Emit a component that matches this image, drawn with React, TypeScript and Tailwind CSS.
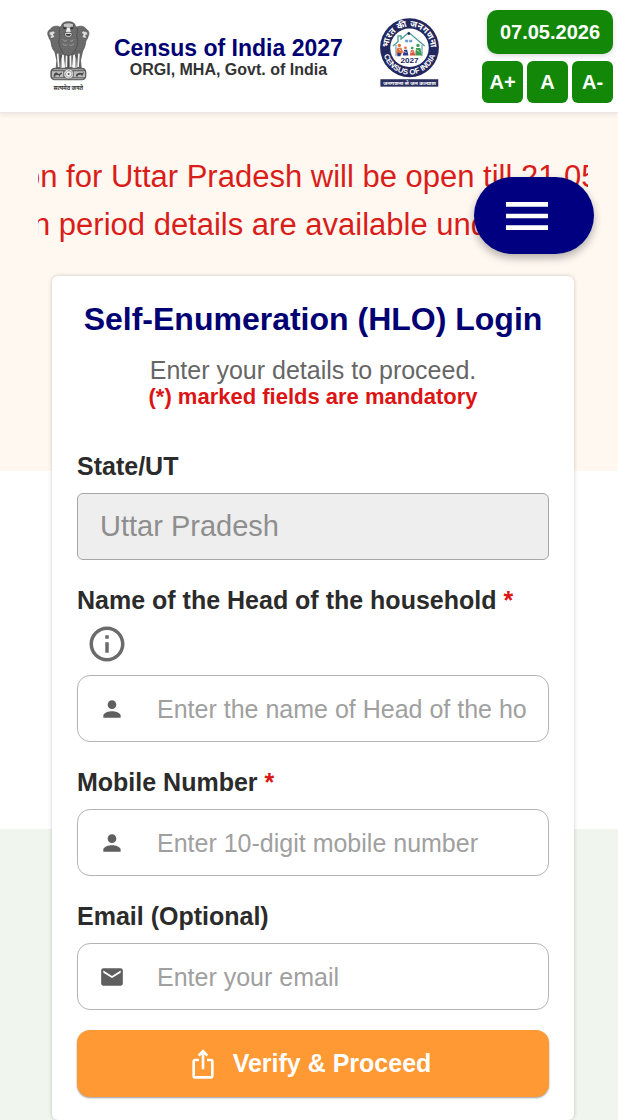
import type { ReactNode } from "react";
import { MdIosShare, MdMail, MdMenu, MdOutlineInfo, MdPerson } from "react-icons/md";

function StateEmblem() {
  return (
    <svg viewBox="51 48 129 213" className="h-[71px] w-[43px] shrink-0" role="img" aria-label="State Emblem of India">
      <defs>
        <pattern id="mane" width="6" height="6" patternUnits="userSpaceOnUse">
          <rect width="6" height="6" fill="#5c5c5c" />
          <path d="M0 1l3 3 3-3" stroke="#a8a8a8" strokeWidth="1.4" fill="none" />
        </pattern>
      </defs>
      {/* side lions */}
      <path d="M92 68c-10-8-26-5-31 5-8 4-10 14-5 22 1 7 6 9 7 16 2 18 8 28 18 34h16z" fill="url(#mane)" stroke="#4a4a4a" strokeWidth="2" />
      <path d="M138 68c10-8 26-5 31 5 8 4 10 14 5 22-1 7-6 9-7 16-2 18-8 28-18 34h-16z" fill="url(#mane)" stroke="#4a4a4a" strokeWidth="2" />
      <path d="M58 82l12-4 6 5-6 5 4 8-9 4-6-3 5-5-7-4z" fill="#ddd" stroke="#555" strokeWidth="1.5" />
      <path d="M172 82l-12-4-6 5 6 5-4 8 9 4 6-3-5-5 7-4z" fill="#ddd" stroke="#555" strokeWidth="1.5" />
      {/* legs */}
      <path d="M72 134l7 32-2 24h14l2-28 6-16 6 44h22l6-44 6 16 2 28h14l-2-24 7-32z" fill="#666" />
      <path d="M83 146l3 40M99 150l3 36M110 144l-1 42M121 144l1 42M132 150l-3 36M147 146l-3 40" stroke="#f2f2f2" strokeWidth="5" fill="none" />
      <path d="M115 138v50M93 150v38M138 150v38" stroke="#3e3e3e" strokeWidth="2.5" />
      {/* front lion */}
      <path d="M94 62c3-9 10-12 21-12s19 3 21 12c8 8 6 22 4 32 6 10 4 30-5 42-6 10-12 16-20 16s-15-6-20-16c-9-12-11-32-5-42-3-10-4-24 4-32z" fill="url(#mane)" stroke="#444" strokeWidth="2" />
      <path d="M99 58c8-6 24-6 32 0l-2 10c-3-2-7-2-9 1h-9c-3-3-7-3-10-1z" fill="#c4c4c4" stroke="#333" strokeWidth="2" />
      <path d="M100 69l8 1M122 70l8-1" stroke="#222" strokeWidth="3.5" />
      <path d="M111 68h8l3 12-3 4h-8l-3-4z" fill="#eee" />
      <path d="M104 84c5-3 17-3 22 0 2 8-3 13-11 13s-13-5-11-13z" fill="#d8d8d8" stroke="#333" strokeWidth="2" />
      <path d="M107 87h16l-3 5h-10z" fill="#333" />
      <path d="M98 103c5 6 8 6 12 4M132 103c-5 6-8 6-12 4M98 116c6 6 10 6 14 3M132 116c-6 6-10 6-14 3" stroke="#bbb" strokeWidth="2" fill="none" />
      {/* abacus with wheel */}
      <rect x="61" y="188" width="108" height="38" rx="13" fill="#5f5f5f" />
      <path d="M70 194h90M70 221h90" stroke="#d0d0d0" strokeWidth="2" />
      <path d="M66 199h34v18H66zM131 199h34v18h-34z" fill="#bdbdbd" />
      <circle cx="116" cy="207" r="15" fill="#efefef" stroke="#555" strokeWidth="2" />
      <circle cx="116" cy="207" r="10" fill="none" stroke="#777" strokeWidth="4" strokeDasharray="2 2" />
      <circle cx="116" cy="207" r="3" fill="#555" />
      <path d="M70 214l3-9 6-3 8 5 7-5 2 4-5 3-2 6-4-5-8 1-2 5zM137 214l3-8 8-3 9 1 5-3-2 6-4 7-3-5-8 1-3 5z" fill="#4c4c4c" />
      <text x="115" y="254" textAnchor="middle" fontSize="17" fontWeight="700" fill="#333" className="font-['Noto_Sans_Devanagari','Noto_Sans',sans-serif]">
        सत्यमेव जयते
      </text>
    </svg>
  );
}

function CensusLogo() {
  return (
    <svg viewBox="46 38 174 204" className="mb-2 h-[69px] w-[59px] shrink-0" role="img" aria-label="Census of India 2027 logo">
      <defs>
        <path id="ringTop" d="M71 126a62 62 0 0 1 124 0" />
        <path id="ringBottom" d="M54 126a79 79 0 0 0 158 0" />
      </defs>
      <circle cx="133" cy="126" r="87" fill="#22285f" />
      <circle cx="133" cy="126" r="57" fill="#fff" />
      <text fontSize="26" fontWeight="700" fill="#fff" className="font-['Noto_Sans_Devanagari','Noto_Sans',sans-serif]">
        <textPath href="#ringTop" startOffset="50%" textAnchor="middle">भारत की जनगणना</textPath>
      </text>
      <text fontSize="23" fontWeight="700" fill="#fff" className="font-['Liberation_Sans',sans-serif]">
        <textPath href="#ringBottom" startOffset="50%" textAnchor="middle">CENSUS OF INDIA</textPath>
      </text>
      {/* house */}
      <path d="M84 121l15-13V91h9v9l23-19 47 40" fill="none" stroke="#4f9c9a" strokeWidth="4" />
      <path d="M93 118v33M170 118v33" stroke="#4f9c9a" strokeWidth="3" />
      <circle cx="131" cy="84" r="4" fill="#22285f" />
      <path d="M120 102h9v8h-9zM132 102h9v8h-9z" fill="#6a9ed0" />
      {/* people */}
      <g fill="#e8703a">
        <circle cx="103" cy="119" r="5" />
        <path d="M94 138l3-12h12l5 12-7 11H96z" />
        <circle cx="121" cy="126" r="4" />
      </g>
      <path d="M113 149l4-17h9l4 17zM98 140l10 2-2 9h-9z" fill="#2a3a8c" />
      <path d="M102 130l6 4M116 137l8 3" stroke="#fff" strokeWidth="2" />
      <g fill="#3d9b52">
        <circle cx="158" cy="119" r="5" />
        <path d="M150 149l2-22h13l5 22z" />
        <circle cx="141" cy="127" r="4" />
      </g>
      <path d="M134 149l3-16h9l4 16z" fill="#e0523a" />
      <path d="M154 132l8 5M137 140l8-2" stroke="#fff" strokeWidth="2" />
      <text x="133" y="171" textAnchor="middle" fontSize="24" fontWeight="700" fill="#22285f" className="font-['Liberation_Sans',sans-serif]">
        2027
      </text>
      <rect x="47" y="219" width="171" height="22" fill="#2b2f60" />
      <text x="133" y="236" textAnchor="middle" fontSize="16" fontWeight="700" fill="#fff" className="font-['Noto_Sans_Devanagari','Noto_Sans',sans-serif]">
        जनगणना से जन कल्याण
      </text>
    </svg>
  );
}

function Header() {
  const sizes = ["A+", "A", "A-"];
  return (
    <header className="relative flex h-[113px] items-center justify-between border-b border-[#ece6e6] bg-white pr-[5px] pl-[47px] shadow-[0_2px_5px_rgba(0,0,0,0.08)]">
      <div className="flex items-center gap-6">
        <StateEmblem />
        <div className="pt-1 text-center font-bold whitespace-nowrap">
          <div className="text-[23px] leading-6 text-[#000072]">Census of India 2027</div>
          <div className="text-base leading-5 text-[#333333]">ORGI, MHA, Govt. of India</div>
        </div>
      </div>
      <div className="flex items-center gap-[43px]">
        <CensusLogo />
        <div className="flex flex-col items-end gap-[7px] text-xl font-bold text-white">
          <time dateTime="2026-05-07" className="flex h-11 w-[126px] items-center justify-center rounded-[10px] bg-[#138808] shadow-[0_2px_5px_rgba(0,0,0,0.15)]">
            07.05.2026
          </time>
          <div className="flex gap-1">
            {sizes.map((size) => (
              <button key={size} type="button" className="h-[42px] w-[41px] rounded-md bg-[#138808]">
                {size}
              </button>
            ))}
          </div>
        </div>
      </div>
    </header>
  );
}

const labelStyle = "block text-[25px] leading-10 font-bold text-[#2b2b2b]";

function Required() {
  return <span className="text-[#dc1414]">*</span>;
}

type FieldProps = {
  id: string;
  label: ReactNode;
  placeholder: string;
  icon: ReactNode;
  type: string;
  info?: boolean;
};

function Field({ id, label, placeholder, icon, type, info }: FieldProps) {
  return (
    <div>
      <label htmlFor={id} className={labelStyle}>
        {label}
      </label>
      {info && (
        <button type="button" aria-label="Information" className="ml-[9px] flex h-12 w-[42px] items-center text-[#6b6b6b]">
          <MdOutlineInfo size={42} />
        </button>
      )}
      <div className="mt-[7px] flex h-[67px] items-center rounded-[13px] border border-[#b4b4b4] bg-white pr-[21px] pl-[21px] text-[#5f5f5f]">
        <span className="shrink-0">{icon}</span>
        <input
          id={id}
          type={type}
          placeholder={placeholder}
          className="ml-8 min-w-0 flex-1 bg-transparent pt-0.5 text-[25px] outline-none placeholder:text-[#a0a0a0]"
        />
      </div>
    </div>
  );
}

export default function App() {
  return (
    <div className="relative font-['Liberation_Sans',Arial,sans-serif]">
      <Header />
      <button
        type="button"
        aria-label="Open menu"
        className="absolute top-[177px] right-6 flex h-[77px] w-[120px] items-center rounded-full bg-[#000080] pl-[25px] text-white shadow-[0_4px_8px_rgba(0,0,0,0.3)]"
      >
        <MdMenu size={56} />
      </button>
      <main className="min-h-[calc(100vh-113px)] bg-[linear-gradient(#fff8f1_0_358px,#ffffff_358px_716px,#f0f5ee_716px)] pt-10 pl-2">
        <div className="mx-[30px] overflow-hidden text-[31px] leading-[48px] whitespace-nowrap text-[#d91e1a]">
          <p className="-ml-[15px]">on for Uttar Pradesh will be open till 21.05.2026</p>
          <p className="-ml-[5px]">n period details are available under</p>
        </div>
        <form
          onSubmit={(event) => event.preventDefault()}
          className="mx-11 mt-[27px] rounded-md bg-white px-[25px] pt-[23px] pb-[23px] shadow-[0_0_4px_rgba(0,0,0,0.2)]"
        >
          <div className="text-center whitespace-nowrap">
            <h1 className="text-[32px] leading-10 font-bold text-[#000072]">Self-Enumeration (HLO) Login</h1>
            <p className="mt-[17px] text-[25px] leading-7 text-[#666666]">Enter your details to proceed.</p>
            <p className="text-[22px] leading-[26px] font-bold text-[#dc1414]">(*) marked fields are mandatory</p>
          </div>
          <div className="mt-9 flex flex-col gap-5">
            <div>
              <label htmlFor="state" className={labelStyle}>
                State/UT
              </label>
              <input
                id="state"
                type="text"
                value="Uttar Pradesh"
                disabled
                className="mt-[7px] block h-[67px] w-full rounded-md border border-[#a6a6a6] bg-[#eeeeee] px-[22px] text-[29px] text-[#8e8e8e]"
              />
            </div>
            <Field
              id="head"
              type="text"
              label={<>Name of the Head of the household <Required /></>}
              placeholder="Enter the name of Head of the household"
              icon={<MdPerson size={26} />}
              info
            />
            <Field
              id="mobile"
              type="tel"
              label={<>Mobile Number <Required /></>}
              placeholder="Enter 10-digit mobile number"
              icon={<MdPerson size={26} />}
            />
            <Field id="email" type="email" label="Email (Optional)" placeholder="Enter your email" icon={<MdMail size={26} />} />
            <button
              type="submit"
              className="flex h-[67px] w-full items-center justify-center gap-3.5 rounded-[13px] bg-[#ff9933] pr-2 text-[25px] font-bold text-white shadow-[0_1px_2px_rgba(0,0,0,0.4)]"
            >
              <MdIosShare size={32} />
              Verify &amp; Proceed
            </button>
          </div>
        </form>
      </main>
    </div>
  );
}
